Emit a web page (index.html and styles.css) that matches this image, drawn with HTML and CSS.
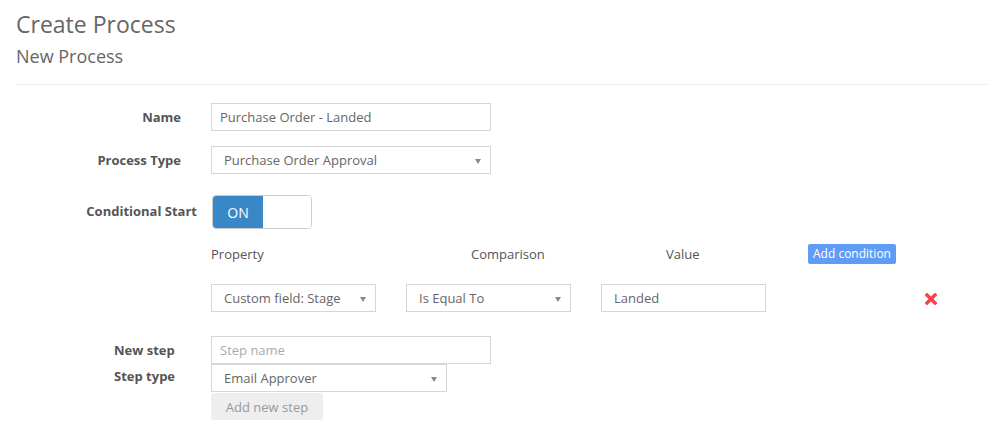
FILE: index.html
```html
<!DOCTYPE html>
<html lang="en">
<head>
    <meta charset="UTF-8">
    <title>Create Process</title>
    <link rel="stylesheet" href="styles.css">
</head>
<body>
    <div class="page">
        <h1 class="title">Create Process</h1>
        <h2 class="subtitle">New Process</h2>
        <hr class="divider">

        <form class="process-form">
            <div class="row row-name">
                <label class="label">Name</label>
                <div class="field">
                    <input class="input input-wide" type="text" value="Purchase Order - Landed">
                </div>
            </div>

            <div class="row row-type">
                <label class="label">Process Type</label>
                <div class="field">
                    <div class="select select-wide">Purchase Order Approval</div>
                </div>
            </div>

            <div class="row row-cond">
                <label class="label label-cond">Conditional Start</label>
                <div class="field">
                    <div class="toggle">
                        <span class="toggle-on">ON</span>
                        <span class="toggle-off"></span>
                    </div>
                </div>
            </div>

            <div class="row">
                <div class="label"></div>
                <div class="field">
                    <div class="conditions">
                        <div class="cond-head">Property</div>
                        <div class="cond-head cond-head-pad">Comparison</div>
                        <div class="cond-head cond-head-pad">Value</div>
                        <div class="cond-head"><button type="button" class="btn-add-cond">Add condition</button></div>

                        <div class="cond-cell"><div class="select select-small">Custom field: Stage</div></div>
                        <div class="cond-cell"><div class="select select-small">Is Equal To</div></div>
                        <div class="cond-cell"><input class="input input-small input-value" type="text" value="Landed"></div>
                        <div class="cond-cell">
                            <svg class="remove" width="12" height="12" viewBox="0 0 12 12">
                                <path d="M2 2 L10 10 M10 2 L2 10" stroke="#fb3f4c" stroke-width="3.4" stroke-linecap="square"/>
                            </svg>
                        </div>
                    </div>
                </div>
            </div>

            <div class="row row-step">
                <label class="label label-step">New step</label>
                <div class="field">
                    <input class="input input-wide" type="text" placeholder="Step name">
                </div>
            </div>

            <div class="row row-steptype">
                <label class="label label-step label-top">Step type</label>
                <div class="field">
                    <div class="select select-mid">Email Approver</div>
                    <button type="button" class="btn-step">Add new step</button>
                </div>
            </div>
        </form>
    </div>
</body>
</html>
```

FILE: styles.css
```css
body {
    margin: 0;
    padding: 0;
    background: #fff;
    font-family: "Open Sans", "Noto Sans", sans-serif;
    font-size: 13px;
    color: #555;
}

.page {
    padding: 0 2px 0 16px;
}

.title {
    margin: 11px 0 0;
    font-size: 23px;
    line-height: 26px;
    font-weight: 400;
    color: #666;
}

.subtitle {
    margin: 8px 0 0;
    font-size: 18px;
    line-height: 22px;
    font-weight: 400;
    color: #666;
}

.divider {
    margin: 17px 0 0;
    border: 0;
    border-top: 1px solid #eee;
}

.process-form {
    margin-top: 18px;
}

.row {
    display: grid;
    grid-template-columns: 165px 1fr;
    column-gap: 30px;
    align-items: center;
}

.row-name { margin-bottom: 15px; }
.row-type { margin-bottom: 21px; }
.row-cond { margin-bottom: 15px; }
.row-step { margin-top: 24px; }

.row-steptype {
    align-items: start;
}

.label {
    text-align: right;
    font-weight: 700;
    color: #555;
}

.label-cond {
    margin-right: -16px;
    padding-bottom: 3px;
    white-space: nowrap;
}

.label-step {
    text-align: left;
    padding-left: 98px;
}

.label-top {
    padding-top: 3px;
}

.input,
.select {
    box-sizing: border-box;
    height: 28px;
    border: 1px solid #d6d6d6;
    background: #fff;
    font-family: inherit;
    font-size: 13px;
    color: #666;
    outline: none;
}

.input {
    display: block;
    padding: 0 8px;
}

.input::placeholder {
    color: #aaa;
}

.select {
    position: relative;
    display: flex;
    align-items: center;
    padding-left: 12px;
}

.select::after {
    content: "";
    position: absolute;
    right: 9px;
    top: 12px;
    border-left: 3px solid transparent;
    border-right: 3px solid transparent;
    border-top: 5px solid #888;
}

.input-wide,
.select-wide { width: 280px; }

.select-mid { width: 236px; }

.input-small,
.select-small { width: 165px; }

.input-value {
    padding-left: 12px;
}

.toggle {
    display: flex;
    width: 100px;
    height: 34px;
    box-sizing: border-box;
    border: 1px solid #ccc;
    border-radius: 4px;
    overflow: hidden;
    margin-left: 1px;
}

.toggle-on {
    width: 50px;
    background: #3a87c7;
    color: #fff;
    font-size: 14px;
    display: flex;
    align-items: center;
    justify-content: center;
}

.toggle-off {
    flex: 1;
    background: #fff;
}

.conditions {
    display: grid;
    grid-template-columns: 165px 165px 165px 1fr;
    column-gap: 30px;
    row-gap: 20px;
    align-items: center;
}

.cond-head {
    height: 20px;
    line-height: 20px;
    color: #555;
}

.cond-head-pad {
    padding-left: 65px;
}

.btn-add-cond {
    margin-left: 12px;
    height: 20px;
    padding: 0 5px;
    border: 0;
    border-radius: 2px;
    background: #5f9cf5;
    color: #fff;
    font-family: inherit;
    font-size: 12px;
    line-height: 20px;
    vertical-align: top;
}

.remove {
    display: block;
    margin-left: 129px;
    margin-top: 2px;
}

.btn-step {
    display: block;
    margin-top: 1px;
    width: 112px;
    height: 27px;
    border: 0;
    border-radius: 3px;
    background: #eee;
    color: #999;
    font-family: inherit;
    font-size: 13px;
    padding: 0;
}
```
